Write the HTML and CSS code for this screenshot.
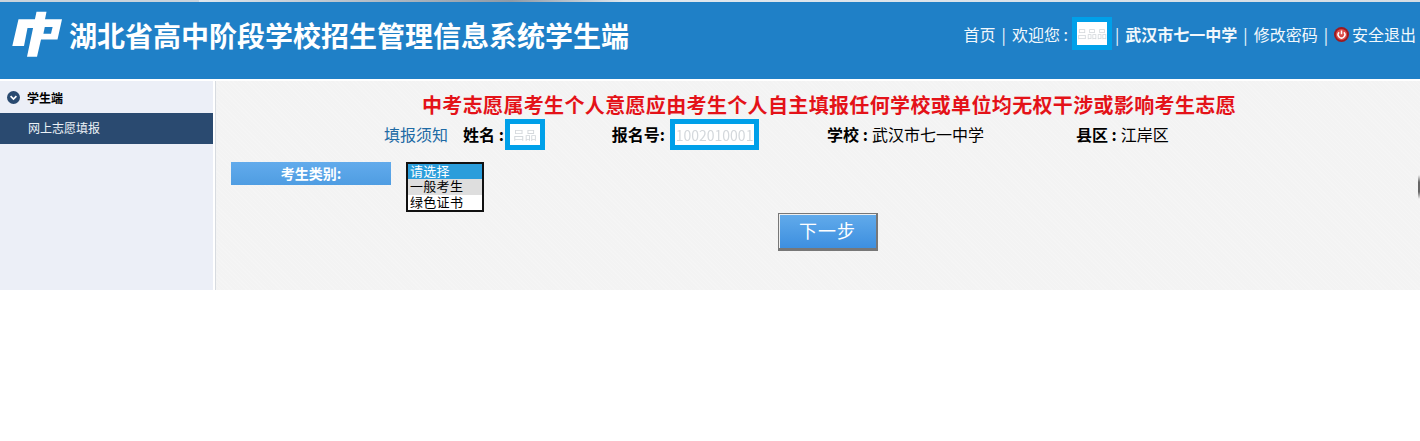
FILE: index.html
```html
<!DOCTYPE html>
<html lang="zh-CN">
<head>
    <meta charset="UTF-8">
    <title>湖北省高中阶段学校招生管理信息系统学生端</title>
    <link rel="stylesheet" href="styles.css">
</head>
<body>

    <div class="top-strip"></div>

    <header class="header">
        <div class="brand">
            <svg class="logo" viewBox="0 0 50 46" aria-hidden="true">
                <polygon points="6.5,8.3 23.5,8.3 22,17 15.5,17 12,35 0.3,35" fill="#fff"/>
                <polygon points="24.5,0.7 34.5,0.7 33,8.3 50,8.3 45.5,28.5 29,28.5 25,45.7 15,45.7" fill="#fff"/>
                <polygon points="32.8,16 40.6,16 39,22.8 31.4,22.8" fill="#1f80c7"/>
            </svg>
            <h1>湖北省高中阶段学校招生管理信息系统学生端</h1>
        </div>
        <nav class="nav">
            <span>首页</span>
            <i class="sep">|</i>
            <span>欢迎您 :</span>
            <span class="masked masked-user"><b>吕品品</b></span>
            <i class="sep">|</i>
            <strong>武汉市七一中学</strong>
            <i class="sep">|</i>
            <span>修改密码</span>
            <i class="sep">|</i>
            <span class="logout">
                <svg class="power" viewBox="0 0 16 16" aria-hidden="true">
                    <circle cx="8" cy="8" r="8" fill="#9c1a20"/>
                    <circle cx="8" cy="8" r="6" fill="#dc4a46"/>
                    <path d="M5.4 5.6a3.6 3.6 0 1 0 5.2 0M8 3.6v4.2" fill="none" stroke="#fff" stroke-width="1.6"/>
                </svg>
                安全退出
            </span>
        </nav>
    </header>

    <div class="layout">
        <aside class="sidebar">
            <div class="side-title">
                <svg class="chevron" viewBox="0 0 13 13" aria-hidden="true">
                    <circle cx="6.5" cy="6.5" r="6.5" fill="#2a4a70"/>
                    <path d="M3.6 5.2l2.9 2.8 2.9-2.8" fill="none" stroke="#fff" stroke-width="1.7"/>
                </svg>
                学生端
            </div>
            <div class="side-item">网上志愿填报</div>
        </aside>

        <main class="content">
            <h2 class="notice">中考志愿属考生个人意愿应由考生个人自主填报任何学校或单位均无权干涉或影响考生志愿</h2>

            <div class="info-row">
                <a class="guide" href="#">填报须知</a>
                <label class="field field-name">姓名 :</label>
                <span class="masked masked-name"><b>吕品</b></span>
                <label class="field field-no">报名号:</label>
                <span class="masked masked-no"><b>1002010001</b></span>
                <span class="field field-school">学校 :</span>
                <span class="value value-school">武汉市七一中学</span>
                <span class="field field-area">县区 :</span>
                <span class="value">江岸区</span>
            </div>

            <div class="form-row">
                <div class="form-label">考生类别:</div>
                <ul class="listbox">
                    <li class="selected">请选择</li>
                    <li class="hover">一般考生</li>
                    <li>绿色证书</li>
                </ul>
            </div>

            <div class="btn-row">
                <button class="next-btn" type="button">下一步</button>
            </div>

            <span class="edge-mark"></span>
        </main>
    </div>

</body>
</html>
```

FILE: styles.css
```css
* {
    margin: 0;
    padding: 0;
    box-sizing: border-box;
}

body {
    background-color: #fff;
    color: #000;
    font-family: "Noto Sans CJK SC", "Liberation Sans", sans-serif;
}

/* Top */
.top-strip {
    height: 2px;
    background: linear-gradient(90deg, #c9d3dc 0, #c9d3dc 14%, #dfe7ee 14%, #8f9aa6 36%, #dfe7ee 44%, #d5dde4 100%);
}

.header {
    height: 77px;
    background-color: #1f80c7;
    display: flex;
    justify-content: space-between;
    padding: 9px 4px 0 12px;
    color: #fff;
}

.brand {
    display: flex;
    align-items: flex-start;
    gap: 7px;
}

.logo {
    width: 50px;
    height: 46px;
}

.brand h1 {
    font-size: 28px;
    font-weight: 700;
    line-height: 34px;
    margin-top: 7px;
}

.nav {
    display: flex;
    align-items: center;
    height: 45px;
    font-size: 16px;
    color: #f2f8fc;
}

.nav .sep {
    font-style: normal;
    margin: 0 6px;
    font-size: 16px;
}

.nav strong {
    font-weight: 700;
}

.logout {
    display: flex;
    align-items: center;
    gap: 3px;
}

.power {
    width: 15px;
    height: 15px;
    margin-top: 2px;
}

/* Masked values */
.masked {
    display: flex;
    align-items: center;
    justify-content: center;
    flex-shrink: 0;
    border: 5px solid #00a0e9;
    background-color: #fff;
    overflow: hidden;
}

.masked b {
    font-weight: 400;
    font-size: 12px;
    color: #d4d8dc;
    white-space: nowrap;
    filter: blur(.6px);
}

.masked-user {
    width: 40px;
    height: 33px;
    margin-left: 4px;
    margin-right: -3px;
}

.masked-user b {
    font-size: 10px;
}

.masked-name {
    width: 40px;
    height: 31px;
    margin-left: 1px;
}

.masked-no {
    width: 89px;
    height: 31px;
    margin-left: 5px;
}

.masked-no b {
    font-size: 14px;
}

/* Layout */
.layout {
    display: flex;
    height: 211px;
    padding-top: 2px;
}

.sidebar {
    width: 213px;
    background-color: #eceff7;
    flex-shrink: 0;
}

.side-title {
    height: 32px;
    display: flex;
    align-items: center;
    gap: 7px;
    padding-left: 7px;
    font-size: 12px;
    font-weight: 700;
}

.chevron {
    width: 13px;
    height: 13px;
}

.side-item {
    height: 31px;
    line-height: 30px;
    padding-left: 28px;
    background-color: #2a4a70;
    color: #edf2f7;
    font-size: 12px;
}

.content {
    flex: 1;
    position: relative;
    margin-left: 3px;
    background-color: #f3f3f3;
    background-image: repeating-linear-gradient(45deg, rgba(255,255,255,.15) 0 1px, transparent 1px 3px);
    box-shadow: -1px 0 0 #d7dbe0;
    padding-top: 11px;
}

.notice {
    padding-left: 22px;
    text-align: center;
    color: #e41218;
    font-size: 20px;
    font-weight: 700;
    line-height: 25px;
    letter-spacing: .35px;
    white-space: nowrap;
}

.info-row {
    display: flex;
    align-items: center;
    height: 31px;
    margin-top: 2px;
    padding-left: 168px;
    font-size: 16px;
}

.guide,
.field,
.value {
    padding-bottom: 2px;
}

.guide {
    color: #1f6ba5;
    text-decoration: none;
}

.field {
    font-weight: 700;
}

.field-name {
    margin-left: 15px;
}

.field-no {
    margin-left: 67px;
}

.field-school {
    margin-left: 68px;
}

.value-school {
    margin-left: 4px;
}

.field-area {
    margin-left: 92px;
    margin-right: 4px;
}

/* Form */
.form-row {
    display: flex;
    align-items: flex-start;
    gap: 15px;
    margin-top: 12px;
    padding-left: 15px;
}

.form-label {
    width: 160px;
    height: 23px;
    line-height: 22px;
    text-align: center;
    background: linear-gradient(180deg, #62abec, #4f9de2);
    color: #fff;
    font-size: 14px;
    font-weight: 700;
}

.listbox {
    width: 78px;
    height: 50px;
    border: 2px solid #111;
    background-color: #fff;
    list-style: none;
    font-size: 13px;
    letter-spacing: .3px;
}

.listbox li {
    height: 15.33px;
    line-height: 13px;
    padding-left: 2px;
}

.listbox .selected {
    background-color: #2a9ddb;
    color: #fff;
}

.listbox .hover {
    background-color: #dedede;
}

.btn-row {
    display: flex;
    justify-content: center;
    padding-left: 20px;
    margin-top: 1px;
}

.next-btn {
    width: 100px;
    height: 38px;
    border: 1px solid #777;
    border-bottom-width: 3px;
    border-right-width: 2px;
    box-shadow: inset 1px 1px 0 #eee;
    background: linear-gradient(180deg, #62abeb, #3d8fdf);
    color: #fff;
    font-family: inherit;
    font-size: 18px;
    letter-spacing: 1px;
    padding-bottom: 3px;
}

.edge-mark {
    position: absolute;
    right: 0;
    top: 94px;
    width: 2px;
    height: 24px;
    background: linear-gradient(180deg, transparent, #666 30%, #666 70%, transparent);
}
```
